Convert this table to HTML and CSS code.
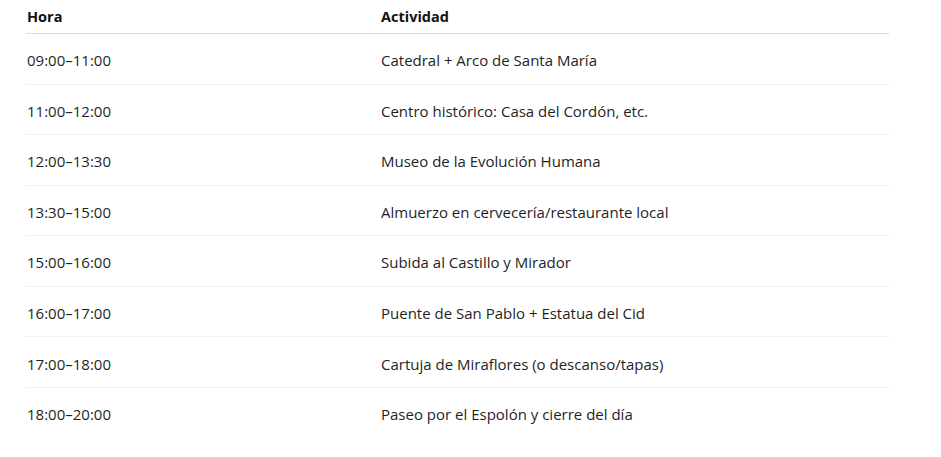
FILE: index.html
```html
<!DOCTYPE html>
<html lang="es">
<head>
  <meta charset="UTF-8">
  <meta name="viewport" content="width=device-width, initial-scale=1.0">
  <title>Itinerario Burgos</title>
  <link rel="stylesheet" href="styles.css">
</head>
<body>

  <table class="plan">
    <thead>
      <tr>
        <th class="col-hora">Hora</th>
        <th>Actividad</th>
      </tr>
    </thead>
    <tbody>
      <tr><td>09:00–11:00</td><td>Catedral + Arco de Santa María</td></tr>
      <tr><td>11:00–12:00</td><td>Centro histórico: Casa del Cordón, etc.</td></tr>
      <tr><td>12:00–13:30</td><td>Museo de la Evolución Humana</td></tr>
      <tr><td>13:30–15:00</td><td>Almuerzo en cervecería/restaurante local</td></tr>
      <tr><td>15:00–16:00</td><td>Subida al Castillo y Mirador</td></tr>
      <tr><td>16:00–17:00</td><td>Puente de San Pablo + Estatua del Cid</td></tr>
      <tr><td>17:00–18:00</td><td>Cartuja de Miraflores (o descanso/tapas)</td></tr>
      <tr><td>18:00–20:00</td><td>Paseo por el Espolón y cierre del día</td></tr>
    </tbody>
  </table>

</body>
</html>
```

FILE: styles.css
```css
body {
  margin: 0;
  padding: 0 52px 0 26px;
  font-family: "Open Sans", "Noto Sans", Arial, sans-serif;
  font-size: 15px;
  color: #1f1f1f;
  background: #fff;
}
.plan {
  width: 863px;
  border-collapse: collapse;
}
.plan th {
  text-align: left;
  font-weight: 700;
  font-size: 14.5px;
  color: #111;
  height: 33px;
  padding: 0 0 0 1px;
  border-bottom: 1px solid #d9d9d9;
  vertical-align: middle;
}
.plan .col-hora {
  width: 354px;
}
.plan td {
  height: 46.55px;
  padding: 3px 0 0 1px;
  border-bottom: 1px solid #f0f0f0;
  vertical-align: middle;
}
.plan td + td,
.plan th + th {
  padding-left: 0;
}
.plan tbody tr:last-child td {
  border-bottom: none;
}
```
